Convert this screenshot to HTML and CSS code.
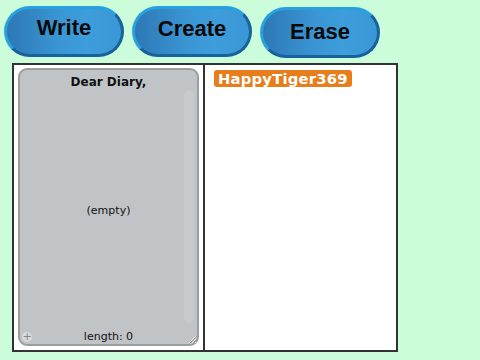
FILE: index.html
```html
<!DOCTYPE html>
<html>
<head>
<meta charset="utf-8">
<link rel="stylesheet" href="styles.css">
</head>
<body>
<div class="toolbar">
  <button class="btn btn-write">Write</button>
  <button class="btn btn-create">Create</button>
  <button class="btn btn-erase">Erase</button>
</div>
<div class="stage">
  <div class="left">
    <div class="card">
      <div class="card-title">Dear Diary,</div>
      <div class="card-body">(empty)</div>
      <div class="card-foot">length: 0</div>
      <div class="scroll"></div>
      <div class="plus">+</div>
      <svg class="grip" width="10" height="10" viewBox="0 0 10 10">
        <path d="M9 2 L2 9 M9 5 L5 9 M9 8 L8 9" stroke="#f2f2f2" stroke-width="1"/>
        <path d="M10 2 L3 9 M10 5 L6 9" stroke="#888" stroke-width="0.8"/>
      </svg>
    </div>
  </div>
  <div class="right">
    <span class="tag">HappyTiger369</span>
  </div>
</div>
</body>
</html>
```

FILE: styles.css
```css
html, body {
  margin: 0;
  padding: 0;
  background: #ccfddb;
  width: 480px;
  height: 360px;
  overflow: hidden;
}
.toolbar {
  display: flex;
  gap: 8px;
  padding: 6px 0 0 4px;
  height: 51px;
}
.btn {
  box-sizing: border-box;
  width: 120px;
  height: 51px;
  border-radius: 26px;
  border: 3px solid;
  border-color: #27a2df #17629c #17629c #27a2df;
  background: linear-gradient(to right, #2e77b6 0%, #3a95d3 45%, #3e9ddb 70%, #3a97d6 100%);
  font-family: "Liberation Sans", Arial, sans-serif;
  font-weight: bold;
  font-size: 22px;
  color: #0a0a0a;
  margin: 0;
}
.btn-write {
  padding: 0 0 8px 0;
}
.btn-create {
  padding: 0 0 5px 0;
}
.btn-erase {
  margin-top: 1px;
  padding: 0 0 2px 0;
}
.stage {
  box-sizing: border-box;
  margin: 6px 0 0 12px;
  width: 386px;
  height: 289px;
  border: 2px solid #333;
  background: #fff;
  display: grid;
  grid-template-columns: 189px 2px 1fr;
}
.left {
  background: #fff;
  border-right: 2px solid #333;
  grid-column: 1 / 3;
  padding: 3px 4px 4px 4px;
}
.card {
  position: relative;
  box-sizing: border-box;
  height: 100%;
  border: 2px solid #9b9d9f;
  border-radius: 9px;
  background: #c1c4c7;
  display: flex;
  flex-direction: column;
  align-items: center;
  font-family: "DejaVu Sans", Verdana, sans-serif;
  color: #111;
}
.card-title {
  font-weight: bold;
  font-size: 12px;
  margin-top: 5px;
}
.card-body {
  flex: 1;
  display: flex;
  align-items: center;
  font-size: 11px;
  padding-top: 2px;
}
.card-foot {
  font-size: 11px;
  margin-bottom: 1px;
}
.scroll {
  position: absolute;
  right: 3px;
  top: 20px;
  bottom: 21px;
  width: 10px;
  border-radius: 5px;
  background: #c8cbcd;
}
.plus {
  position: absolute;
  left: 2px;
  bottom: 2px;
  width: 10px;
  height: 10px;
  border-radius: 50%;
  background: #d8dadc;
  color: #888;
  font-size: 11px;
  line-height: 10px;
  text-align: center;
}
.grip {
  position: absolute;
  right: 0;
  bottom: 0;
}
.right {
  grid-column: 3;
  padding: 5px 0 0 9px;
}
.tag {
  display: inline-block;
  height: 17px;
  line-height: 17px;
  padding: 0 4px;
  border-radius: 3px;
  background: #e77d1b;
  color: #fff;
  font-family: "DejaVu Sans", Verdana, sans-serif;
  font-weight: bold;
  font-size: 14.8px;
  letter-spacing: 0.2px;
}
```
